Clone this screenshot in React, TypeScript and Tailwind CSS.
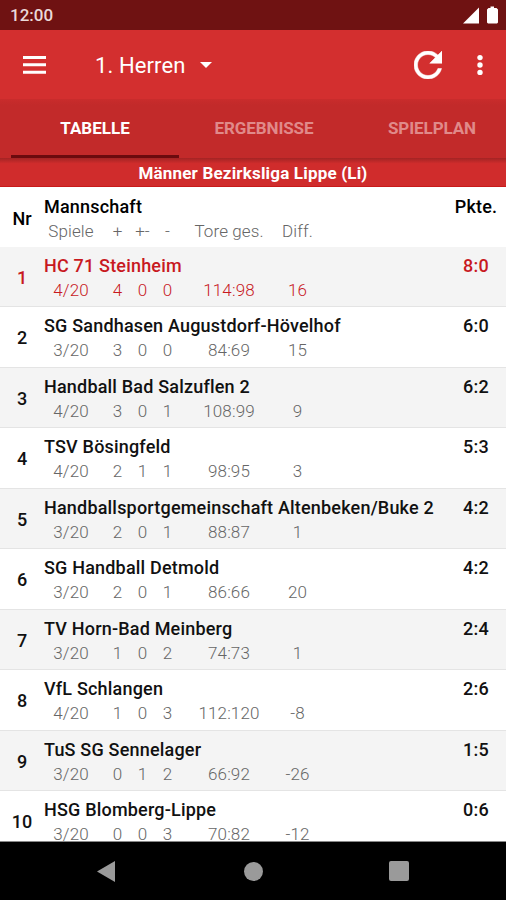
import clsx from 'clsx';

interface Team {
  rank: number;
  name: string;
  games: string;
  won: number;
  drawn: number;
  lost: number;
  goals: string;
  diff: number;
  points: string;
}

const teams: Team[] = [
  { rank: 1, name: 'HC 71 Steinheim', games: '4/20', won: 4, drawn: 0, lost: 0, goals: '114:98', diff: 16, points: '8:0' },
  { rank: 2, name: 'SG Sandhasen Augustdorf-Hövelhof', games: '3/20', won: 3, drawn: 0, lost: 0, goals: '84:69', diff: 15, points: '6:0' },
  { rank: 3, name: 'Handball Bad Salzuflen 2', games: '4/20', won: 3, drawn: 0, lost: 1, goals: '108:99', diff: 9, points: '6:2' },
  { rank: 4, name: 'TSV Bösingfeld', games: '4/20', won: 2, drawn: 1, lost: 1, goals: '98:95', diff: 3, points: '5:3' },
  { rank: 5, name: 'Handballsportgemeinschaft Altenbeken/Buke 2', games: '3/20', won: 2, drawn: 0, lost: 1, goals: '88:87', diff: 1, points: '4:2' },
  { rank: 6, name: 'SG Handball Detmold', games: '3/20', won: 2, drawn: 0, lost: 1, goals: '86:66', diff: 20, points: '4:2' },
  { rank: 7, name: 'TV Horn-Bad Meinberg', games: '3/20', won: 1, drawn: 0, lost: 2, goals: '74:73', diff: 1, points: '2:4' },
  { rank: 8, name: 'VfL Schlangen', games: '4/20', won: 1, drawn: 0, lost: 3, goals: '112:120', diff: -8, points: '2:6' },
  { rank: 9, name: 'TuS SG Sennelager', games: '3/20', won: 0, drawn: 1, lost: 2, goals: '66:92', diff: -26, points: '1:5' },
  { rank: 10, name: 'HSG Blomberg-Lippe', games: '3/20', won: 0, drawn: 0, lost: 3, goals: '70:82', diff: -12, points: '0:6' },
];

function StatusBar() {
  return (
    <div className="flex h-[30px] shrink-0 items-center justify-between bg-[#6f1212] pr-2 pl-[10px]">
      <span className="pt-[2px] text-[17px] font-medium text-[#eadada]">12:00</span>
      <svg className="h-[18px] w-[36px]" viewBox="0 0 36 18" fill="#fff">
        <path d="M1 17.500 17 1.500V17.500Z" />
        <path d="M28.500 .5h3.500v1.500h2.500l1.500 1.500v13l-1 1h-9l-1-1v-13l1.500-1.500h2Z" />
      </svg>
    </div>
  );
}

function Toolbar() {
  return (
    <div className="flex h-[69px] shrink-0 items-center bg-[#d32f2f] text-white">
      <button className="ml-[23px]">
        <svg className="h-[18px] w-[23px]" viewBox="0 0 23 18" fill="currentColor">
          <path d="M0 0h23v3H0zM0 7.300h23v3H0zM0 14.700h23v3H0z" />
        </svg>
      </button>
      <button className="ml-[49px] flex items-center">
        <span className="w-[92px] pt-[2px] text-left text-[22px] tracking-[0.1px] whitespace-nowrap">1. Herren</span>
        <svg className="ml-[13px] h-[6px] w-3" viewBox="0 0 12 6" fill="currentColor">
          <path d="M0 0h12L6 6z" />
        </svg>
      </button>
      <button className="ml-auto">
        <svg className="h-7 w-7" viewBox="4 4 16 16" fill="currentColor" stroke="currentColor" strokeWidth="0.3">
          <path d="M17.650 6.350C16.200 4.900 14.210 4 12 4c-4.420 0-7.990 3.580-7.990 8s3.570 8 7.990 8c3.730 0 6.840-2.550 7.730-6h-2.080c-.82 2.330-3.040 4-5.650 4-3.310 0-6-2.690-6-6s2.690-6 6-6c1.660 0 3.140.69 4.220 1.780L13 11h7V4l-2.350 2.350z" />
        </svg>
      </button>
      <button className="mr-[23px] ml-[35px]">
        <svg className="h-[22px] w-[6px]" viewBox="0 0 6 22" fill="currentColor">
          <circle cx="3" cy="3.600" r="2.700" />
          <circle cx="3" cy="11" r="2.700" />
          <circle cx="3" cy="18.400" r="2.700" />
        </svg>
      </button>
    </div>
  );
}

function Tabs() {
  return (
    <div className="grid h-[59px] shrink-0 grid-cols-[168px_168px_168px] bg-linear-to-b from-[#c92c2c] to-[#c22a2a] to-10% pl-[11px] text-center text-[17px] leading-[59px] font-bold text-[#e08a8a]">
      <div className="relative text-white">
        TABELLE
        <div className="absolute inset-x-0 bottom-0 h-[3px] bg-[#6b0b0e]" />
      </div>
      <div className="pl-[2px] tracking-[-0.1px]">ERGEBNISSE</div>
      <div className="pl-[2px] tracking-[-0.1px]">SPIELPLAN</div>
    </div>
  );
}

const statGrid =
  'grid grid-cols-[54px_7px_25px_25px_25px_98px_39px] text-center text-[17px] leading-6 font-light';

function TableHeader() {
  return (
    <div className="flex h-[60px] shrink-0 text-black">
      <div className="w-[44px] pt-[3px] text-center text-[18px] leading-[57px] font-medium">Nr</div>
      <div className="grow pt-[8px]">
        <div className="text-[18px] leading-6 font-medium tracking-[0.19px]">Mannschaft</div>
        <div className={clsx(statGrid, 'tracking-[0.1px] text-[#666]')}>
          <span>Spiele</span>
          <span />
          <span>+</span>
          <span>+-</span>
          <span>-</span>
          <span>Tore ges.</span>
          <span>Diff.</span>
        </div>
      </div>
      <div className="w-[60px] pt-[8px] text-center text-[18px] leading-6 font-medium tracking-[0.19px]">Pkte.</div>
    </div>
  );
}

function TeamRow({ team }: { team: Team }) {
  const leader = team.rank === 1;

  return (
    <div
      className={clsx(
        'flex h-[60.440px] shrink-0 border-b border-[#e4e4e4]',
        team.rank % 2 === 1 ? 'bg-[#f4f4f4]' : 'bg-white',
        leader ? 'text-[#c8191f]' : 'text-[#111]'
      )}
    >
      <div className="w-[44px] pt-[3px] text-center text-[18px] leading-[56px] font-medium">{team.rank}</div>
      <div className="grow pt-[7px]">
        <div className="text-[18px] leading-6 font-medium tracking-[0.19px] whitespace-nowrap">{team.name}</div>
        <div className={clsx(statGrid, 'tracking-[0.15px]', leader ? 'text-[#c8191f]' : 'text-[#666]')}>
          <span>{team.games}</span>
          <span />
          <span>{team.won}</span>
          <span>{team.drawn}</span>
          <span>{team.lost}</span>
          <span>{team.goals}</span>
          <span>{team.diff}</span>
        </div>
      </div>
      <div className="w-[60px] pt-[7px] text-center text-[18px] leading-6 font-medium tracking-[0.19px]">{team.points}</div>
    </div>
  );
}

function NavBar() {
  return (
    <div className="flex h-[58px] shrink-0 items-center bg-black text-[#9a9a9a]">
      <svg className="ml-[97px] h-[21px] w-[18px]" viewBox="0 0 18 21" fill="currentColor">
        <path d="M18 0v21L0 10.500z" />
      </svg>
      <div className="ml-[129px] size-[19px] rounded-full bg-current" />
      <div className="ml-[126px] size-5 rounded-[2px] bg-current" />
    </div>
  );
}

export default function App() {
  return (
    <div className="flex h-[900px] w-[506px] flex-col overflow-hidden bg-white font-[Roboto,sans-serif]">
      <StatusBar />
      <Toolbar />
      <Tabs />
      <div className="h-[29px] shrink-0 border-b border-[#c81a1a] bg-linear-to-b from-[#a32424] to-[#d02c2c] to-20% text-center text-[17px] leading-[31px] font-bold tracking-[0.18px] text-white">
        Männer Bezirksliga Lippe (Li)
      </div>
      {/* last row runs under the navigation bar */}
      <div className="flex min-h-0 grow flex-col overflow-hidden border-b border-[#888]">
        <TableHeader />
        {teams.map((team) => (
          <TeamRow key={team.rank} team={team} />
        ))}
      </div>
      <NavBar />
    </div>
  );
}
